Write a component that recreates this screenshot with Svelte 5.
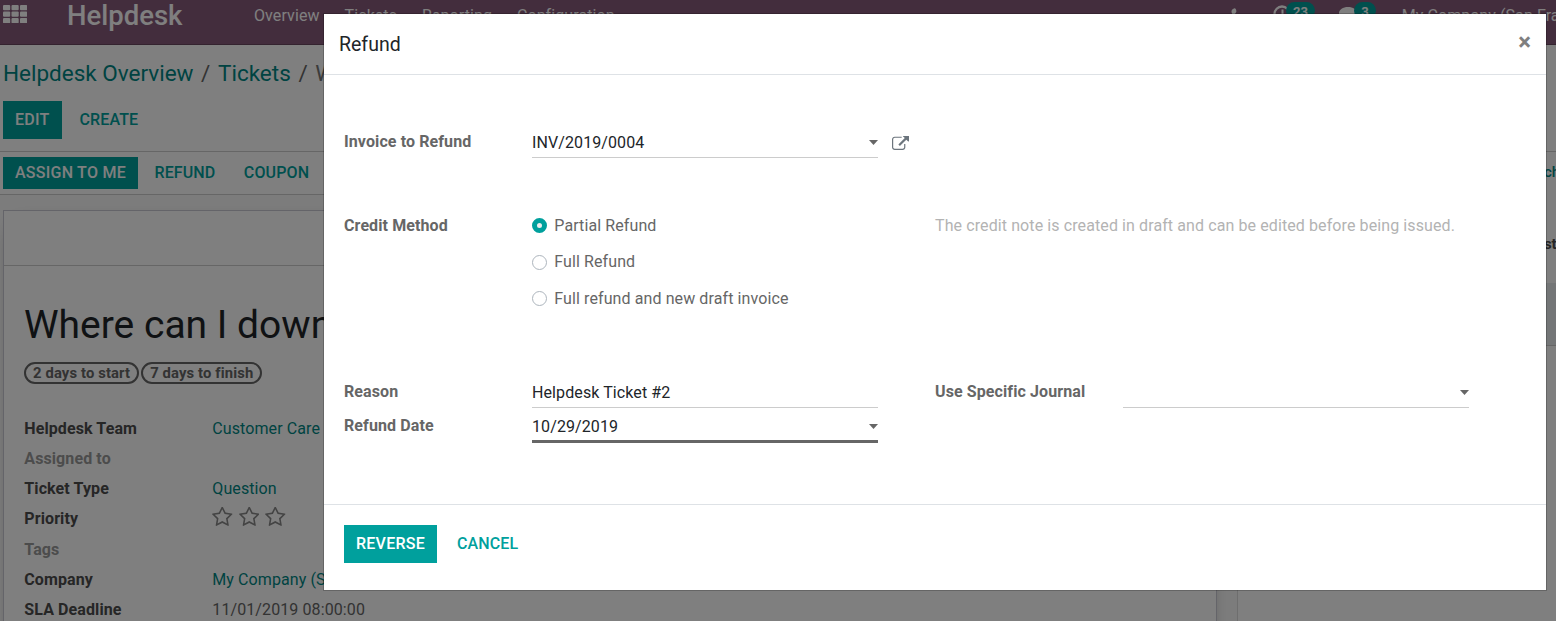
<script>
  const menu = ['Overview', 'Tickets', 'Reporting', 'Configuration'];
  const fields = [
    { label: 'Helpdesk Team', value: 'Customer Care', link: true },
    { label: 'Assigned to', muted: true },
    { label: 'Ticket Type', value: 'Question', link: true },
    { label: 'Priority', stars: 3 },
    { label: 'Tags', muted: true },
    { label: 'Company', value: 'My Company (S', link: true },
    { label: 'SLA Deadline', value: '11/01/2019 08:00:00' }
  ];
  const methods = ['Partial Refund', 'Full Refund', 'Full refund and new draft invoice'];
  let method = $state('Partial Refund');
</script>

<div class="app">
  <nav class="navbar">
    <svg class="apps" viewBox="0 0 24 18" width="24" height="18">
      {#each [0, 6.5, 13] as y}
        {#each [0, 8.5, 17] as x}
          <rect {x} {y} width="7.2" height="5.2" rx="1" />
        {/each}
      {/each}
    </svg>
    <span class="brand">Helpdesk</span>
    <div class="menu">
      {#each menu as item}<span>{item}</span>{/each}
    </div>
    <div class="systray">
      <svg class="phone" viewBox="0 0 14 14" width="14" height="14">
        <path d="M3 0.4C4.6 0 5.200 1.500 5.400 3.300C5.500 4.500 4 5 4.200 5.700C5 7.700 6.500 9.200 8.500 10C9.200 10.200 9.500 8.700 10.800 8.800L13.600 10.200C14 12.500 12 14 10 13.500C5 12 1.500 8 .5 4C.3 2 1.500.7 3 .4Z" />
      </svg>
      <svg class="clock" viewBox="0 0 18 18" width="18" height="18">
        <circle cx="9" cy="9" r="7.500" fill="none" stroke="currentColor" stroke-width="2.300" />
        <path d="M8.500 4.500h2V11H6V9.500h2.500Z" />
      </svg>
      <span class="count">23</span>
      <svg class="chat" viewBox="0 0 20 16" width="20" height="16">
        <path d="M9 0C14 0 18 2.700 18 6.200S14 12.400 9 12.400L7.500 12.300C6 13.700 4.200 14.700 2 15C3 13.900 3.700 12.700 3.800 11.300C1.500 10.200 0 8.300 0 6.200C0 2.700 4 0 9 0Z" />
      </svg>
      <span class="count">3</span>
      <span class="company">My Company (San Fra</span>
    </div>
  </nav>

  <header class="control">
    <div class="crumbs"><a>Helpdesk Overview</a><i>/</i><a>Tickets</a><i>/</i><span>W</span></div>
    <div class="actions">
      <button class="btn primary">EDIT</button>
      <button class="btn link">CREATE</button>
    </div>
  </header>

  <div class="content">
    <section class="form">
      <div class="status">
        <button class="btn primary">ASSIGN TO ME</button>
        <button class="btn link">REFUND</button>
        <button class="btn link">COUPON</button>
      </div>
      <div class="sheet">
        <div class="button-box"></div>
        <div class="sheet-body">
          <h1>Where can I down</h1>
          <div class="pills"><span>2 days to start</span><span>7 days to finish</span></div>
          <div class="fields">
            {#each fields as f}
              <div class="field">
                <span class="label" class:muted={f.muted}>{f.label}</span>
                {#if f.stars}
                  <span class="stars">
                    {#each Array(f.stars) as _}
                      <svg viewBox="64 128 1664 1490" width="20.500" height="19.500">
                        <path d="M1201 1004l306-297-422-62-189-382-189 382-422 62 306 297-73 421 378-199 377 199zm527-357q0 22-26 48l-363 354 86 500q1 7 1 20 0 50-41 50-19 0-40-12l-449-236-449 236q-22 12-40 12-21 0-31.500-14.500t-10.500-35.500q0-6 2-20l86-500-364-354q-25-27-25-48 0-37 56-46l502-73 225-455q19-41 49-41t49 41l225 455 502 73q56 9 56 46z" />
                      </svg>
                    {/each}
                  </span>
                {:else}
                  <span class:teal={f.link}>{f.value ?? ''}</span>
                {/if}
              </div>
            {/each}
          </div>
        </div>
      </div>
    </section>
    <aside class="chatter">
      <div class="topbar">ch</div>
      <div class="day">st</div>
      <div class="note"></div>
    </aside>
  </div>

  <div class="backdrop">
    <div class="modal">
      <div class="modal-head">
        <h4>Refund</h4>
        <span class="close">×</span>
      </div>
      <div class="modal-body">
        <div class="row invoice">
          <label>Invoice to Refund</label>
          <div class="input"><span>INV/2019/0004</span><b class="caret"></b></div>
          <svg class="external" viewBox="0 64 1792 1472" width="17" height="14">
            <path d="M1408 928v320q0 119-84.500 203.500t-203.500 84.500h-832q-119 0-203.500-84.500t-84.500-203.500v-832q0-119 84.500-203.500t203.500-84.500h704q14 0 23 9t9 23v64q0 14-9 23t-23 9h-704q-66 0-113 47t-47 113v832q0 66 47 113t113 47h832q66 0 113-47t47-113v-320q0-14 9-23t23-9h64q14 0 23 9t9 23zm384-864v512q0 26-19 45t-45 19-45-19l-176-176-652 652q-10 10-23 10t-23-10l-114-114q-10-10-10-23t10-23l652-652-176-176q-19-19-19-45t19-45 45-19h512q26 0 45 19t19 45z" />
          </svg>
        </div>
        <div class="row method">
          <label>Credit Method</label>
          <div class="radios">
            {#each methods as m}
              <div class="radio" onclick={() => (method = m)} role="presentation">
                <i class:on={method === m}></i><span>{m}</span>
              </div>
            {/each}
          </div>
          <p>The credit note is created in draft and can be edited before being issued.</p>
        </div>
        <div class="row reason">
          <label>Reason</label>
          <div class="input"><span>Helpdesk Ticket #2</span></div>
          <label class="second">Use Specific Journal</label>
          <div class="input"><span></span><b class="caret"></b></div>
        </div>
        <div class="row date">
          <label>Refund Date</label>
          <div class="input focus"><span>10/29/2019</span><b class="caret"></b></div>
        </div>
      </div>
      <footer>
        <button class="btn primary">REVERSE</button>
        <button class="btn link">CANCEL</button>
      </footer>
    </div>
  </div>
</div>

<style>
  :global(body) { margin: 0; overflow: hidden; }
  * { box-sizing: border-box; }
  .app {
    position: relative; display: flex; flex-direction: column;
    width: 1556px; height: 621px; overflow: hidden; background: #fff; color: #666;
    font-family: Roboto, sans-serif; font-size: 16px; line-height: 24px; letter-spacing: .1px; white-space: nowrap;
  }
  .navbar {
    flex: none; display: flex; align-items: flex-start; height: 45px; padding-left: 3px;
    background: #875a7b; border-bottom: 1px solid #68465f; color: #fff;
  }
  svg { display: block; fill: currentColor; flex: none; }
  .apps { margin-top: 5px; }
  .brand { flex: none; margin: 2px 0 0 40px; width: 187px; font-size: 27.500px; font-weight: 500; line-height: 28px; letter-spacing: 0; }
  .menu { flex: none; display: flex; gap: 24.900px; margin-top: 4px; width: 361px; }
  .systray { display: flex; flex: 1; min-width: 0; justify-content: flex-start; margin-left: 609px; }
  .phone { margin: 8px 0 0 7px; }
  .clock { margin: 5px 0 0 28px; }
  .chat { margin: 7px 0 0 24px; }
  .count {
    height: 17px; margin: 2px 0 0 -5px; padding: 0 7px; border-radius: 9px;
    background: #00a09d; font-size: 13px; font-weight: 700; line-height: 19px;
  }
  .company { margin: 4px 0 0 26px; }
  .control { flex: none; height: 107px; padding: 14px 3px 0; border-bottom: 1px solid #ccc; }
  .crumbs { display: flex; font-size: 22.500px; line-height: 29px; height: 28px; letter-spacing: 0; }
  .crumbs a { color: #008784; }
  .crumbs i { width: 24.500px; text-align: center; font-style: normal; }
  .crumbs span { color: #777; }
  .actions { display: flex; margin-top: 14px; }
  .btn {
    height: 38px; padding: 1px 12px 0; border: 0; background: none; letter-spacing: .25px;
    display: flex; align-items: flex-start;
    font: 500 16px/36px Roboto, sans-serif; white-space: nowrap;
  }
  .primary { background: #00a09d; color: #fff; }
  .link { color: #00a09d; letter-spacing: .12px; }
  .actions .link { margin-left: 6px; }
  .content { flex: 1; display: grid; grid-template-columns: 1237px 1fr; min-height: 0; }
  .form { background: #f9f9f9; }
  .status {
    display: flex; align-items: flex-start; height: 43px; padding: 5px 3px 0;
    background: #fff; border-bottom: 1px solid #ccc;
  }
  .status .btn { height: 32px; line-height: 30px; margin-right: 4.500px; }
  .sheet {
    height: 600px; width: 1214px; margin: 15px 0 0 3px; background: #fff; border: 1px solid #c8c8d3;
    box-shadow: 0 5px 20px -15px #000;
  }
  .button-box { height: 55px; border-bottom: 1px solid #ccc; }
  .sheet-body { padding: 35px 20px 0; }
  h1 { margin: 0; color: #212529; font-size: 39px; font-weight: 400; line-height: 48px; letter-spacing: 0; }
  .pills { display: flex; gap: 2px; margin-top: 13px; }
  .pills span {
    height: 22px; padding: 0 7px; border: 2px solid #666; border-radius: 11px;
    font-size: 14.800px; font-weight: 700; line-height: 19px; letter-spacing: .13px;
  }
  .fields { margin: 32.800px 0 0 .3px; }
  .field { display: grid; grid-template-columns: 188px 1fr; height: 30.200px; }
  .label { color: #4c4c4c; font-weight: 700; }
  .label.muted { color: #999; }
  .teal { color: #008784; }
  .stars { display: flex; gap: 6px; margin-top: -.2px; color: #888; }
  .chatter { background: #fff; border-left: 1px solid #ddd; overflow: hidden; }
  .topbar { margin: 8px 0 0 306px; color: #008784; font-weight: 500; letter-spacing: 0; font-size: 15px; }
  .day { margin: 48px 0 0 306px; color: #4c4c4c; font-weight: 700; letter-spacing: -.3px; font-size: 15px; }
  .note { height: 63px; margin-top: 27px; background: #e9ecef; border-bottom: 1px solid #ccc; }
  .backdrop { position: absolute; inset: 0; padding: 13px 9px 0 323px; background: rgba(0, 0, 0, .5); }
  .modal {
    display: flex; flex-direction: column; height: 578px; background: #fff; background-clip: padding-box;
    border: 1px solid rgba(0, 0, 0, .2);
  }
  .modal-head {
    display: flex; justify-content: space-between; align-items: center; height: 61px;
    padding: 0 15px; border-bottom: 1px solid #dee2e6;
  }
  h4 { margin: 0; padding-top: 2px; color: #212529; font-size: 19.500px; font-weight: 400; letter-spacing: 0; }
  .close { margin: -4px 0 0; color: #7f7f7f; font-size: 24px; font-weight: 700; line-height: 24px; letter-spacing: 0; }
  .modal-body { display: flex; flex-direction: column; height: 429px; padding: 55px 20px 0; }
  .row { display: flex; align-items: flex-start; }
  .row label { width: 188px; font-weight: 700; }
  .row .second { margin-left: 57px; }
  .invoice { height: 84px; }
  .method { height: 166px; }
  .reason { height: 34px; }
  .input {
    display: flex; justify-content: space-between; align-items: flex-start; width: 346px; height: 28px;
    border-bottom: 1px solid #ccc; color: #212529;
  }
  .input span { padding-top: 1px; }
  .focus { height: 29px; border-bottom: 3px solid #666; }
  .caret { width: 9px; height: 5px; margin-top: 10px; background: #666; clip-path: polygon(0 0, 100% 0, 50% 100%); }
  .external { margin: 6px 0 0 14px; color: #6c757d; }
  .radios { width: 403px; }
  .radio { display: flex; align-items: flex-start; height: 36.500px; }
  .radio i { width: 15px; height: 15px; margin: 4px 7.300px 0 0; border: 1px solid #adb5bd; border-radius: 50%; }
  .radio i.on { border: 5px solid #00a09d; background: #eee; }
  .radio span { margin-top: -.2px; }
  p { margin: 0; color: #b3b3b3; }
  footer { display: flex; gap: 8px; padding: 20px; border-top: 1px solid #dee2e6; }
</style>
